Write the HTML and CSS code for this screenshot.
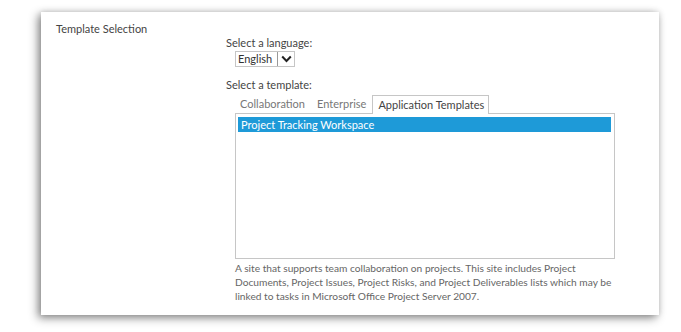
FILE: index.html
```html
<!DOCTYPE html>
<html>
<head>
<meta charset="utf-8">
<link rel="stylesheet" href="styles.css">
</head>
<body>
<div class="card">
  <div class="section-label">Template Selection</div>
  <div class="section-body">
    <div class="field-label">Select a language:</div>
    <div class="select">
      <span class="select-value">English</span>
      <span class="select-btn"><svg width="11" height="8" viewBox="0 0 11 8"><path d="M1.2 1.5 L5.5 6 L9.8 1.5" fill="none" stroke="#222" stroke-width="2"/></svg></span>
    </div>
    <div class="field-label second">Select a template:</div>
    <div class="tabs">
      <span class="tab">Collaboration</span>
      <span class="tab">Enterprise</span>
      <span class="tab active">Application Templates</span>
    </div>
    <div class="listbox">
      <div class="list-item selected">Project Tracking Workspace</div>
    </div>
    <div class="desc">A site that supports team collaboration on projects. This site includes Project Documents, Project Issues, Project Risks, and Project Deliverables lists which may be linked to tasks in Microsoft Office Project Server 2007.</div>
  </div>
</div>
</body>
</html>
```
FILE: styles.css
```css
html, body {
  margin: 0;
  padding: 0;
  background: #fff;
}
body {
  font-family: Lato, "Noto Sans", sans-serif;
  font-size: 11px;
  color: #444;
  padding: 12px 0 0 41px;
  height: 332px;
  box-sizing: border-box;
  overflow: hidden;
}
.card {
  width: 618px;
  height: 303px;
  background: #fff;
  box-shadow: -3px 3px 9px rgba(0,0,0,0.45), 0 0 6px rgba(0,0,0,0.15);
  display: flex;
  box-sizing: border-box;
  padding: 9px 0 0 15px;
}
.section-label {
  width: 170px;
  line-height: 16px;
  color: #444;
}
.section-body {
  padding-top: 14px;
  width: 390px;
}
.field-label {
  line-height: 16px;
  color: #444;
}
.field-label.second {
  margin-top: 10px;
}
.select {
  margin: 0 0 0 9px;
  display: inline-flex;
  border: 1px solid #c6c6c6;
  height: 16px;
  box-sizing: border-box;
  align-items: stretch;
}
.select-value {
  padding: 0 5px 0 2px;
  line-height: 14px;
  color: #333;
}
.select-btn {
  width: 17px;
  border-left: 1px solid #999;
  box-sizing: border-box;
  display: flex;
  align-items: center;
  justify-content: center;
}
.tabs {
  display: flex;
  margin: 1px 0 0 9px;
  align-items: flex-end;
  height: 19px;
}
.tab {
  color: #777;
  padding: 0 6px;
  line-height: 18px;
}
.tab:first-child {
  padding-left: 5px;
}
.tab.active {
  color: #444;
  border: 1px solid #c6c6c6;
  border-bottom: none;
  background: #fff;
  padding: 0 4px 0 5px;
  position: relative;
  top: 1px;
}
.listbox {
  margin-left: 9px;
  width: 380px;
  height: 146px;
  border: 1px solid #c6c6c6;
  box-sizing: border-box;
  padding: 3px 3px 0 2px;
}
.list-item {
  line-height: 15px;
  padding-left: 3px;
}
.list-item.selected {
  background: #1e9ad8;
  color: #fff;
}
.desc {
  margin: 2px 0 0 9px;
  font-size: 10.2px;
  line-height: 14px;
  color: #666;
  width: 380px;
}
```
